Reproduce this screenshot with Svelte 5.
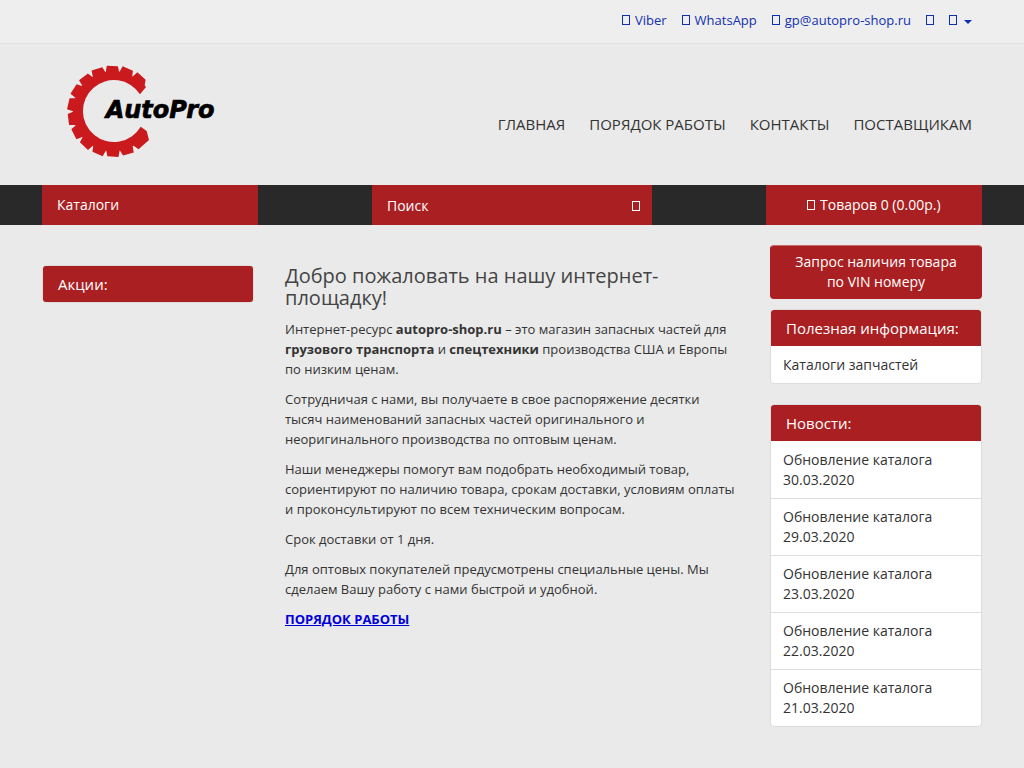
<script lang="ts">
  interface Contact {
    label: string;
    title: string;
    caret?: boolean;
  }

  const contacts: Contact[] = [
    { label: "Viber", title: "Viber" },
    { label: "WhatsApp", title: "WhatsApp" },
    { label: "gp@autopro-shop.ru", title: "E-mail" },
    { label: "", title: "Контакты" },
    { label: "", title: "Личный кабинет", caret: true },
  ];

  const menu: string[] = ["Главная", "Порядок работы", "Контакты", "Поставщикам"];

  const newsDates: string[] = [
    "30.03.2020",
    "29.03.2020",
    "23.03.2020",
    "22.03.2020",
    "21.03.2020",
  ];

  let search = $state("");

  // Gear around the logo text, open on the right side
  function polar(radius: number, degrees: number): string {
    const a = (degrees * Math.PI) / 180;
    return `${(189 + radius * Math.cos(a)).toFixed(1)} ${(184 + radius * Math.sin(a)).toFixed(1)}`;
  }

  function gearPath(): string {
    const points: string[] = [];
    for (let k = 0; k < 14; k++) {
      const mid = -51 - k * 19.9;
      points.push(polar(120, mid + 9.6), polar(136, mid + 7), polar(138, mid - 7), polar(120, mid - 9.6));
    }
    points[0] = "284 106";
    points[points.length - 4] = polar(120, 59);
    points[points.length - 3] = polar(137, 56);
    points[points.length - 2] = "297 270";
    points[points.length - 1] = "290 243";
    return `M288 111 L${points.join(" L")} L272 230 A93 93 0 1 1 270 133 Z`;
  }
</script>

<nav class="top">
  <div class="container top-links">
    {#each contacts as contact}
      <a href="#contact" title={contact.title}>
        <span class="glyph"></span>
        {#if contact.label}<span>{contact.label}</span>{/if}
        {#if contact.caret}<span class="caret"></span>{/if}
      </a>
    {/each}
  </div>
</nav>

<header>
  <div class="container header-row">
    <a href="#home" class="logo" aria-label="AutoPro">
      <svg viewBox="0 0 540 360" width="180" height="120">
        <path d={gearPath()} fill="#cb1a1e" />
        <text x="167" y="203">AutoPro</text>
      </svg>
    </a>
    <nav class="menu">
      {#each menu as item}
        <a href="#menu">{item}</a>
      {/each}
    </nav>
  </div>
</header>

<div class="bar">
  <div class="container bar-row">
    <button class="catalog">Каталоги</button>
    <form class="search" onsubmit={(e) => e.preventDefault()}>
      <input type="text" placeholder="Поиск" aria-label="Поиск" bind:value={search} />
      <button aria-label="Найти"><span class="glyph"></span></button>
    </form>
    <button class="cart"><span class="glyph"></span> Товаров 0 (0.00р.)</button>
  </div>
</div>

<div class="container columns">
  <aside class="left">
    <section class="panel">
      <h3 class="heading">Акции:</h3>
    </section>
  </aside>

  <main>
    <h1>Добро пожаловать на нашу интернет-площадку!</h1>
    <p>
      Интернет-ресурс <strong>autopro-shop.ru</strong> – это магазин запасных частей для
      <strong>грузового транспорта</strong> и <strong>спецтехники</strong> производства США и
      Европы по низким ценам.
    </p>
    <p>
      Сотрудничая с нами, вы получаете в свое распоряжение десятки тысяч наименований запасных
      частей оригинального и неоригинального производства по оптовым ценам.
    </p>
    <p>
      Наши менеджеры помогут вам подобрать необходимый товар, сориентируют по наличию товара,
      срокам доставки, условиям оплаты и проконсультируют по всем техническим вопросам.
    </p>
    <p>Срок доставки от 1 дня.</p>
    <p>
      Для оптовых покупателей предусмотрены специальные цены. Мы сделаем Вашу работу с нами
      быстрой и удобной.
    </p>
    <p><a href="#order" class="order">ПОРЯДОК РАБОТЫ</a></p>
  </main>

  <aside class="right">
    <button class="vin">Запрос наличия товара<br />по VIN номеру</button>

    <section class="panel">
      <h3 class="heading">Полезная информация:</h3>
      <a href="#parts">Каталоги запчастей</a>
    </section>

    <section class="panel">
      <h3 class="heading">Новости:</h3>
      {#each newsDates as date}
        <a href="#news">Обновление каталога {date}</a>
      {/each}
    </section>
  </aside>
</div>

<style>
  :global(body) {
    background: #eaeaea;
    color: #333;
    font: 400 13px/20px "Open Sans", sans-serif;
  }

  a {
    text-decoration: none;
  }

  button,
  input {
    border: 0;
    margin: 0;
    color: #fff;
    background: #aa2022;
    font: inherit;
    font-size: 14px;
  }

  button {
    cursor: pointer;
  }

  .container {
    box-sizing: border-box;
    max-width: 970px;
    margin: 0 auto;
    padding: 0 15px;
  }

  .glyph {
    display: inline-block;
    box-sizing: border-box;
    width: 8px;
    height: 10px;
    border: 1px solid currentColor;
  }

  .top {
    background: #eee;
    border-bottom: 1px solid #e2e2e2;
  }

  .top-links {
    display: flex;
    justify-content: flex-end;
    gap: 15px;
    padding: 10px 25px 13px;
  }

  .top-links a {
    display: flex;
    align-items: center;
    gap: 5px;
    color: #1030b0;
  }

  .caret {
    margin: 3px 0 0 2px;
    border-top: 4px solid;
    border-left: 4px solid transparent;
    border-right: 4px solid transparent;
  }

  .header-row {
    display: flex;
    align-items: center;
    justify-content: space-between;
    padding: 6px 25px 15px 23px;
  }

  .logo svg {
    display: block;
  }

  .logo text {
    font: italic 700 72px "DejaVu Sans", sans-serif;
    fill: #000;
    stroke: #000;
    stroke-width: 2px;
  }

  .menu {
    display: flex;
    gap: 24px;
    padding-top: 28px;
    font-size: 15px;
    text-transform: uppercase;
  }

  .menu a {
    color: #333;
  }

  .bar {
    background: #292929;
  }

  .bar-row {
    display: flex;
    justify-content: space-between;
  }

  .catalog,
  .cart {
    width: 216px;
    height: 40px;
    padding: 0 15px;
  }

  .catalog {
    text-align: left;
  }

  .cart .glyph {
    margin-right: 1px;
  }

  .search {
    display: flex;
    width: 280px;
    height: 40px;
    background: #aa2022;
  }

  .search input {
    flex: 1;
    min-width: 0;
    padding: 2px 15px 0;
    outline: 0;
  }

  .search input::placeholder {
    color: #fff;
    opacity: 1;
  }

  .search button {
    padding: 2px 12px 0;
  }

  .columns {
    display: grid;
    grid-template-columns: 212px 1fr 212px;
    gap: 30px;
    padding-bottom: 40px;
  }

  .left {
    padding-top: 40px;
  }

  main {
    padding: 40px 2px 0 1px;
  }

  h1 {
    margin: 0 0 10px;
    color: #444;
    font-size: 20px;
    line-height: 22px;
    font-weight: 400;
  }

  p {
    margin: 0 0 10px;
  }

  .order {
    color: #0000dd;
    font-weight: 700;
    text-decoration: underline;
  }

  .right {
    padding-top: 20px;
  }

  .vin {
    display: block;
    width: 100%;
    margin-bottom: 10px;
    padding: 6px 12px;
    border: 1px solid #aa2022;
    border-top-color: #c4686a;
    border-radius: 4px;
    line-height: 20px;
  }

  .heading {
    margin: 0;
    padding: 10px 15px 9px;
    color: #fff;
    background: #aa2022;
    font-size: 15px;
    line-height: 17px;
    font-weight: 400;
  }

  .panel {
    overflow: hidden;
    margin-bottom: 20px;
    border: 1px solid #ddd;
    border-radius: 4px;
    background: #fff;
  }

  .panel a {
    display: block;
    padding: 8px 12px;
    border-top: 1px solid #ddd;
    color: #333;
    font-size: 14px;
  }

  .heading + a {
    border-top-color: #fff;
  }
</style>
